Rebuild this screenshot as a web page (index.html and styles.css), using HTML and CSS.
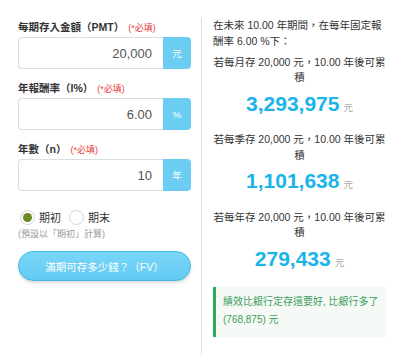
FILE: index.html
```html
<!DOCTYPE html>
<html lang="zh-Hant">
<head>
<meta charset="utf-8">
<title>定期定額試算</title>
<link rel="stylesheet" href="styles.css">
</head>
<body>
<div class="page">
  <div class="form-col">
    <div class="field-label">每期存入金額（PMT）<span class="req">(*必填)</span></div>
    <div class="field">
      <input class="field-input" type="text" value="20,000">
      <span class="addon">元</span>
    </div>

    <div class="field-label spaced">年報酬率（I%）<span class="req">(*必填)</span></div>
    <div class="field">
      <input class="field-input" type="text" value="6.00">
      <span class="addon">%</span>
    </div>

    <div class="field-label spaced">年數（n）<span class="req">(*必填)</span></div>
    <div class="field">
      <input class="field-input" type="text" value="10">
      <span class="addon">年</span>
    </div>

    <div class="radios">
      <label class="radio"><span class="circle checked"></span>期初</label>
      <label class="radio"><span class="circle"></span>期末</label>
    </div>
    <div class="hint">(預設以「期初」計算)</div>

    <button class="calc-btn" type="button">滿期可存多少錢？（FV）</button>
  </div>

  <div class="result-col">
    <p class="intro">在未來 10.00 年期間，在每年固定報酬率 6.00 %下：</p>

    <div class="block">
      <p class="block-text">若每月存 20,000 元，10.00 年後可累積</p>
      <div class="amount">3,293,975<span class="unit">元</span></div>
    </div>

    <div class="block">
      <p class="block-text">若每季存 20,000 元，10.00 年後可累積</p>
      <div class="amount">1,101,638<span class="unit">元</span></div>
    </div>

    <div class="block">
      <p class="block-text">若每年存 20,000 元，10.00 年後可累積</p>
      <div class="amount">279,433<span class="unit">元</span></div>
    </div>

    <div class="alert">績效比銀行定存還要好, 比銀行多了 (768,875) 元</div>
  </div>
</div>
</body>
</html>
```

FILE: styles.css
```css
html, body {
  margin: 0;
  padding: 0;
  background: #ffffff;
}

body {
  font-family: "Liberation Sans", "Noto Sans CJK TC", sans-serif;
  font-size: 10.5px;
  color: #333333;
}

.page {
  display: flex;
  box-sizing: border-box;
  height: 355px;
  padding: 18px 0 0 18px;
}

.form-col {
  width: 173px;
  margin-right: 10px;
  display: flex;
  flex-direction: column;
}

.field-label {
  font-weight: bold;
  line-height: 18px;
  margin-bottom: 1px;
  color: #333333;
  white-space: nowrap;
}

.field-label.spaced {
  margin-top: 10px;
}

.req {
  font-weight: normal;
  color: #e8403a;
  font-size: 9px;
  margin-left: 4px;
  line-height: 1;
}

.field {
  display: flex;
  height: 32px;
  box-sizing: border-box;
}

.field-input {
  flex: 1;
  min-width: 0;
  box-sizing: border-box;
  border: 1px solid #dddddd;
  border-right: none;
  border-radius: 4px 0 0 4px;
  padding: 0 11px 0 6px;
  margin: 0;
  font-family: "Liberation Sans", "Noto Sans CJK TC", sans-serif;
  font-size: 13px;
  color: #555555;
  text-align: right;
  background: #ffffff;
  outline: none;
}

.addon {
  width: 28px;
  display: flex;
  align-items: center;
  justify-content: center;
  background: #6bcdf1;
  color: #ffffff;
  font-size: 9.5px;
  border-radius: 0 4px 4px 0;
}

.radios {
  display: flex;
  align-items: center;
  height: 16px;
  margin-top: 18px;
  padding-left: 2px;
}

.radio {
  display: flex;
  align-items: center;
  font-size: 11px;
  color: #333333;
  margin-right: 8px;
}

.circle {
  width: 15px;
  height: 15px;
  box-sizing: border-box;
  border: 1px solid #d4d4d4;
  border-radius: 50%;
  margin-right: 4px;
  display: flex;
  align-items: center;
  justify-content: center;
  background: #ffffff;
}

.circle.checked::after {
  content: "";
  width: 9px;
  height: 9px;
  border-radius: 50%;
  background: #6b8a22;
}

.hint {
  margin-top: 2px;
  line-height: 14px;
  font-size: 9px;
  color: #9a9a9a;
}

.calc-btn {
  margin-top: 10px;
  height: 30px;
  width: 173px;
  border: 1px solid #3fb8e6;
  border-radius: 15px;
  background: linear-gradient(#7ad6f7, #62cbf3);
  box-shadow: 0 2px 3px rgba(0, 0, 0, 0.15);
  color: #ffffff;
  font-family: "Liberation Sans", "Noto Sans CJK TC", sans-serif;
  font-size: 10.5px;
  padding: 0;
}

.result-col {
  border-left: 1px solid #dddddd;
  padding-left: 11px;
  width: 173px;
}

.intro {
  margin: 0;
  line-height: 15.5px;
}

.block {
  margin-top: 5.75px;
  text-align: center;
}

.block + .block {
  margin-top: 15.75px;
}

.block-text {
  margin: 0;
  line-height: 15.5px;
}

.amount {
  margin-top: 4.75px;
  height: 26px;
  line-height: 26px;
  font-size: 21px;
  font-weight: bold;
  color: #1bb4ea;
}

.unit {
  font-size: 9.5px;
  font-weight: normal;
  line-height: 1;
  color: #a8a8a8;
  margin-left: 4px;
}

.alert {
  margin-top: 15.5px;
  border-left: 3px solid #2daa5e;
  background: #f6faf7;
  color: #3d9c5a;
  font-size: 10px;
  line-height: 18px;
  padding: 6px 2px 8px 7px;
}
```
